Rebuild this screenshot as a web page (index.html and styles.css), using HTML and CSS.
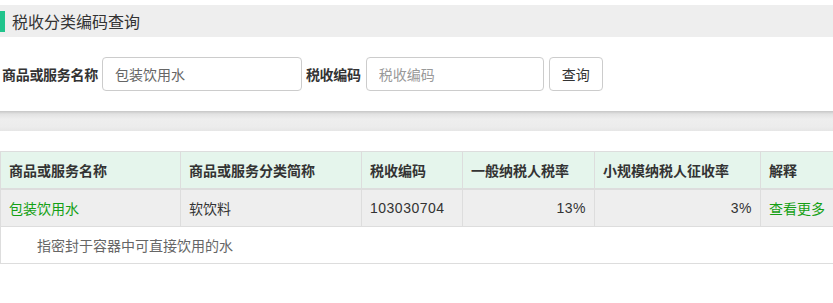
FILE: index.html
```html
<!DOCTYPE html>
<html lang="zh">
<head>
<meta charset="utf-8">
<title>税收分类编码查询</title>
<link rel="stylesheet" href="styles.css">
</head>
<body>
<div class="page">
  <div class="title-bar"><span class="accent"></span><h1 class="title">税收分类编码查询</h1></div>
  <form class="search">
    <label class="label">商品或服务名称</label>
    <input class="field field-name" type="text" value="包装饮用水">
    <label class="label">税收编码</label>
    <input class="field field-code" type="text" placeholder="税收编码">
    <button class="btn" type="button">查询</button>
  </form>
  <div class="band"></div>
  <table class="result">
    <colgroup>
      <col class="c1"><col class="c2"><col class="c3"><col class="c4"><col class="c5"><col class="c6">
    </colgroup>
    <thead>
      <tr>
        <th>商品或服务名称</th>
        <th>商品或服务分类简称</th>
        <th>税收编码</th>
        <th>一般纳税人税率</th>
        <th>小规模纳税人征收率</th>
        <th>解释</th>
      </tr>
    </thead>
    <tbody>
      <tr class="data">
        <td class="link">包装饮用水</td>
        <td>软饮料</td>
        <td class="num">103030704</td>
        <td class="num right">13%</td>
        <td class="num right">3%</td>
        <td class="link">查看更多</td>
      </tr>
      <tr class="desc">
        <td colspan="6">指密封于容器中可直接饮用的水</td>
      </tr>
    </tbody>
  </table>
</div>
</body>
</html>
```
FILE: styles.css
```css
html, body {
  margin: 0;
  padding: 0;
  background: #fff;
  overflow: hidden;
}
body {
  font-family: "Noto Sans CJK SC", "Liberation Sans", sans-serif;
  color: #333;
  font-size: 14px;
}
.page {
  padding-top: 5px;
  width: 840px;
}
.title-bar {
  display: flex;
  align-items: center;
  height: 32px;
  background: #eee;
  gap: 7px;
}
.accent {
  width: 5px;
  height: 21px;
  background: #20c48c;
}
.title {
  margin: 0;
  font-size: 16px;
  font-weight: normal;
  color: #333;
  line-height: 20px;
}
.search {
  display: flex;
  align-items: center;
  padding: 20px 0 20px 2px;
  margin: 0;
}
.label {
  font-weight: bold;
  font-size: 14px;
  letter-spacing: -0.3px;
  color: #333;
  margin-right: 4px;
}
.field {
  box-sizing: border-box;
  height: 34px;
  border: 1px solid #ccc;
  border-radius: 4px;
  padding: 0 12px;
  font-family: "Noto Sans CJK SC", "Liberation Sans", sans-serif;
  font-size: 14px;
  color: #666;
  outline: none;
}
.field::placeholder {
  color: #999;
}
.field-name {
  width: 200px;
  margin-right: 4px;
}
.field-code {
  width: 178px;
  margin-left: 1px;
  margin-right: 5px;
}
.btn {
  box-sizing: border-box;
  height: 34px;
  width: 54px;
  border: 1px solid #ccc;
  border-radius: 4px;
  background: #fff;
  font-family: "Noto Sans CJK SC", "Liberation Sans", sans-serif;
  font-size: 14px;
  color: #333;
  padding: 0;
}
.band {
  height: 20px;
  background: linear-gradient(#c6c6c6 0, #e2e2e2 3px, #eeeeee 8px, #ececec 16px, #e6e6e6 20px);
  margin-bottom: 20px;
}
.result {
  border-collapse: collapse;
  table-layout: fixed;
  width: 840px;
  font-size: 14px;
}
.c1 { width: 180px; }
.c2 { width: 181px; }
.c3 { width: 101px; }
.c4 { width: 132px; }
.c5 { width: 166px; }
.c6 { width: 80px; }
.result th,
.result td {
  border: 1px solid #ddd;
  padding: 0 8px;
  text-align: left;
  box-sizing: border-box;
  white-space: nowrap;
}
.result th {
  height: 37px;
  background: #e5f5ec;
  font-weight: bold;
  color: #333;
  border-bottom: 2px solid #ddd;
}
.data td {
  height: 38px;
  background: #eee;
  color: #333;
}
.num {
  font-family: "Liberation Sans", sans-serif;
  letter-spacing: 0.5px;
}
.right {
  text-align: right !important;
}
.link {
  color: #14a014 !important;
}
.desc td {
  height: 37px;
  padding-left: 36px;
  color: #666;
  background: #fff;
}
```
